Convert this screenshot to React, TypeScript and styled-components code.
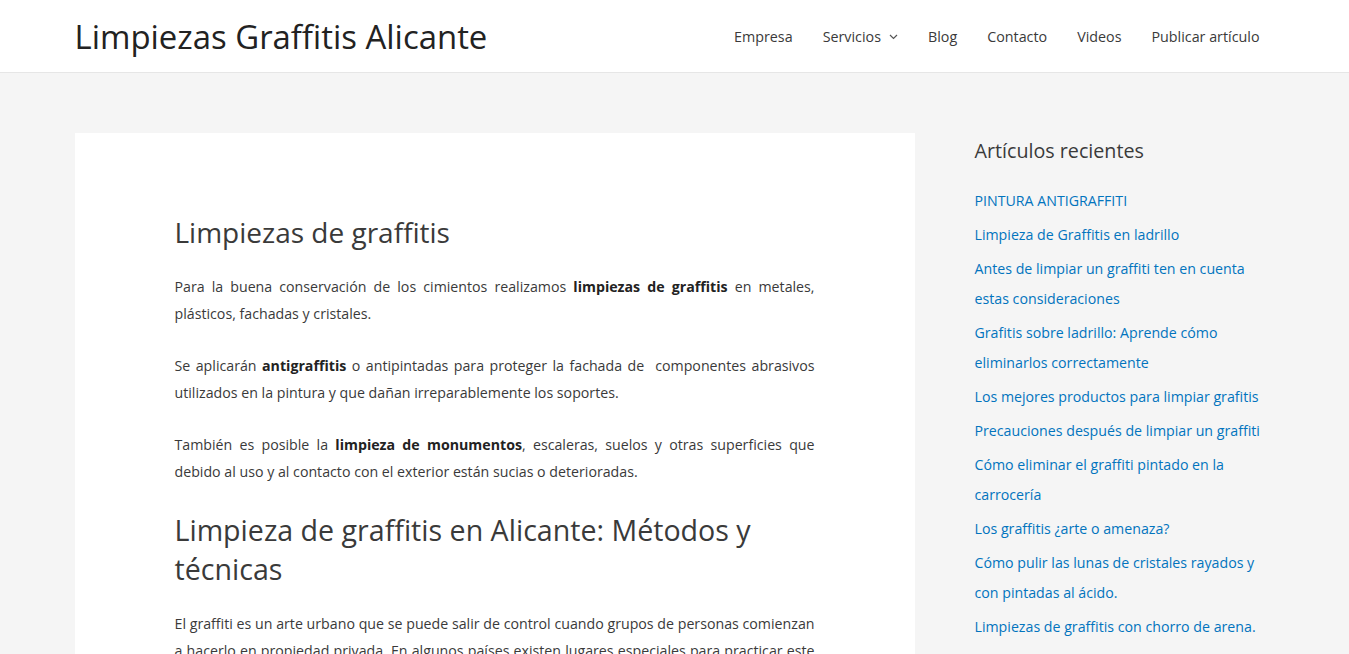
import React from "react";
import styled, { createGlobalStyle } from "styled-components";

const Global = createGlobalStyle`
  html { scrollbar-width: none; }
  html::-webkit-scrollbar { display: none; }
  body {
    margin: 0;
    background: #f5f5f5;
    font-family: "Open Sans", "Noto Sans", sans-serif;
    color: #3a3a3a;
    font-size: 14px;
  }
  * { box-sizing: border-box; }
`;

const Header = styled.header`
  background: #fff;
  border-bottom: 1px solid #e6e6e6;
`;

const Container = styled.div`
  max-width: 1240px;
  margin: 0 auto;
  padding: 0 20px;
`;

const HeaderRow = styled(Container)`
  height: 72px;
  display: flex;
  align-items: center;
  justify-content: space-between;
`;

const SiteTitle = styled.a`
  font-size: 32.9px;
  color: #222;
  text-decoration: none;
  line-height: 1.2;
  margin-top: 2px;
`;

const Nav = styled.nav`
  display: flex;
  align-items: center;
  margin-top: 1px;
`;

const NavItem = styled.a`
  display: flex;
  align-items: center;
  gap: 8px;
  padding: 0 15px;
  font-size: 14.3px;
  color: #3a3a3a;
  text-decoration: none;
  line-height: 72px;
`;

const Chevron = () => (
  <svg width="9" height="6" viewBox="0 0 9 6" fill="none">
    <path d="M1 1l3.5 3.5L8 1" stroke="#555" strokeWidth="1.2" />
  </svg>
);

const Main = styled(Container)`
  display: flex;
  align-items: flex-start;
  padding-top: 60px;
`;

const Article = styled.article`
  width: 840px;
  flex: none;
  background: #fff;
  padding: 80px 100px 40px;
`;

const H1 = styled.h1`
  font-size: 28px;
  font-weight: 400;
  line-height: 39px;
  margin: 0 0 21px;
  color: #3a3a3a;
`;

const H2 = styled.h2`
  font-size: 28.6px;
  font-weight: 400;
  line-height: 39px;
  margin: 2px 0 22px;
  color: #3a3a3a;
`;

const P = styled.p`
  font-size: 14.2px;
  line-height: 27px;
  margin: 0 0 25px;
  text-align: justify;
  color: #3a3a3a;
  b { font-weight: 700; color: #222; }
`;

const Sidebar = styled.aside`
  flex: 1;
  padding-left: 60px;
  padding-top: 5px;
`;

const WidgetTitle = styled.h2`
  font-size: 19.7px;
  font-weight: 400;
  line-height: 26px;
  margin: 0 0 22px;
  color: #3a3a3a;
`;

const List = styled.ul`
  list-style: none;
  margin: 0;
  padding: 0;
`;

const Item = styled.li`
  font-size: 14.2px;
  line-height: 30px;
  margin-bottom: 4px;
  a { color: #0274be; text-decoration: none; }
`;

const posts = [
  "PINTURA ANTIGRAFFITI",
  "Limpieza de Graffitis en ladrillo",
  "Antes de limpiar un graffiti ten en cuenta estas consideraciones",
  "Grafitis sobre ladrillo: Aprende cómo eliminarlos correctamente",
  "Los mejores productos para limpiar grafitis",
  "Precauciones después de limpiar un graffiti",
  "Cómo eliminar el graffiti pintado en la carrocería",
  "Los graffitis ¿arte o amenaza?",
  "Cómo pulir las lunas de cristales rayados y con pintadas al ácido.",
  "Limpiezas de graffitis con chorro de arena.",
];

export default function App() {
  return (
    <>
      <Global />
      <Header>
        <HeaderRow>
          <SiteTitle href="#">Limpiezas Graffitis Alicante</SiteTitle>
          <Nav>
            <NavItem href="#">Empresa</NavItem>
            <NavItem href="#">
              Servicios <Chevron />
            </NavItem>
            <NavItem href="#">Blog</NavItem>
            <NavItem href="#">Contacto</NavItem>
            <NavItem href="#">Videos</NavItem>
            <NavItem href="#">Publicar artículo</NavItem>
          </Nav>
        </HeaderRow>
      </Header>
      <Main>
        <Article>
          <H1>Limpiezas de graffitis</H1>
          <P>
            Para la buena conservación de los cimientos realizamos <b>limpiezas de graffitis</b> en
            metales, plásticos, fachadas y cristales.
          </P>
          <P>
            Se aplicarán <b>antigraffitis</b> o antipintadas para proteger la fachada de&nbsp; componentes
            abrasivos utilizados en la pintura y que dañan irreparablemente los soportes.
          </P>
          <P>
            También es posible la <b>limpieza de monumentos</b>, escaleras, suelos y otras superficies que
            debido al uso y al contacto con el exterior están sucias o deterioradas.
          </P>
          <H2>Limpieza de graffitis en Alicante: Métodos y técnicas</H2>
          <P>
            El graffiti es un arte urbano que se puede salir de control cuando grupos de personas comienzan
            a hacerlo en propiedad privada. En algunos países existen lugares especiales para practicar este
            arte, pero en otros lugares se considera vandalismo.
          </P>
        </Article>
        <Sidebar>
          <WidgetTitle>Artículos recientes</WidgetTitle>
          <List>
            {posts.map((p) => (
              <Item key={p}>
                <a href="#">{p}</a>
              </Item>
            ))}
          </List>
        </Sidebar>
      </Main>
    </>
  );
}
